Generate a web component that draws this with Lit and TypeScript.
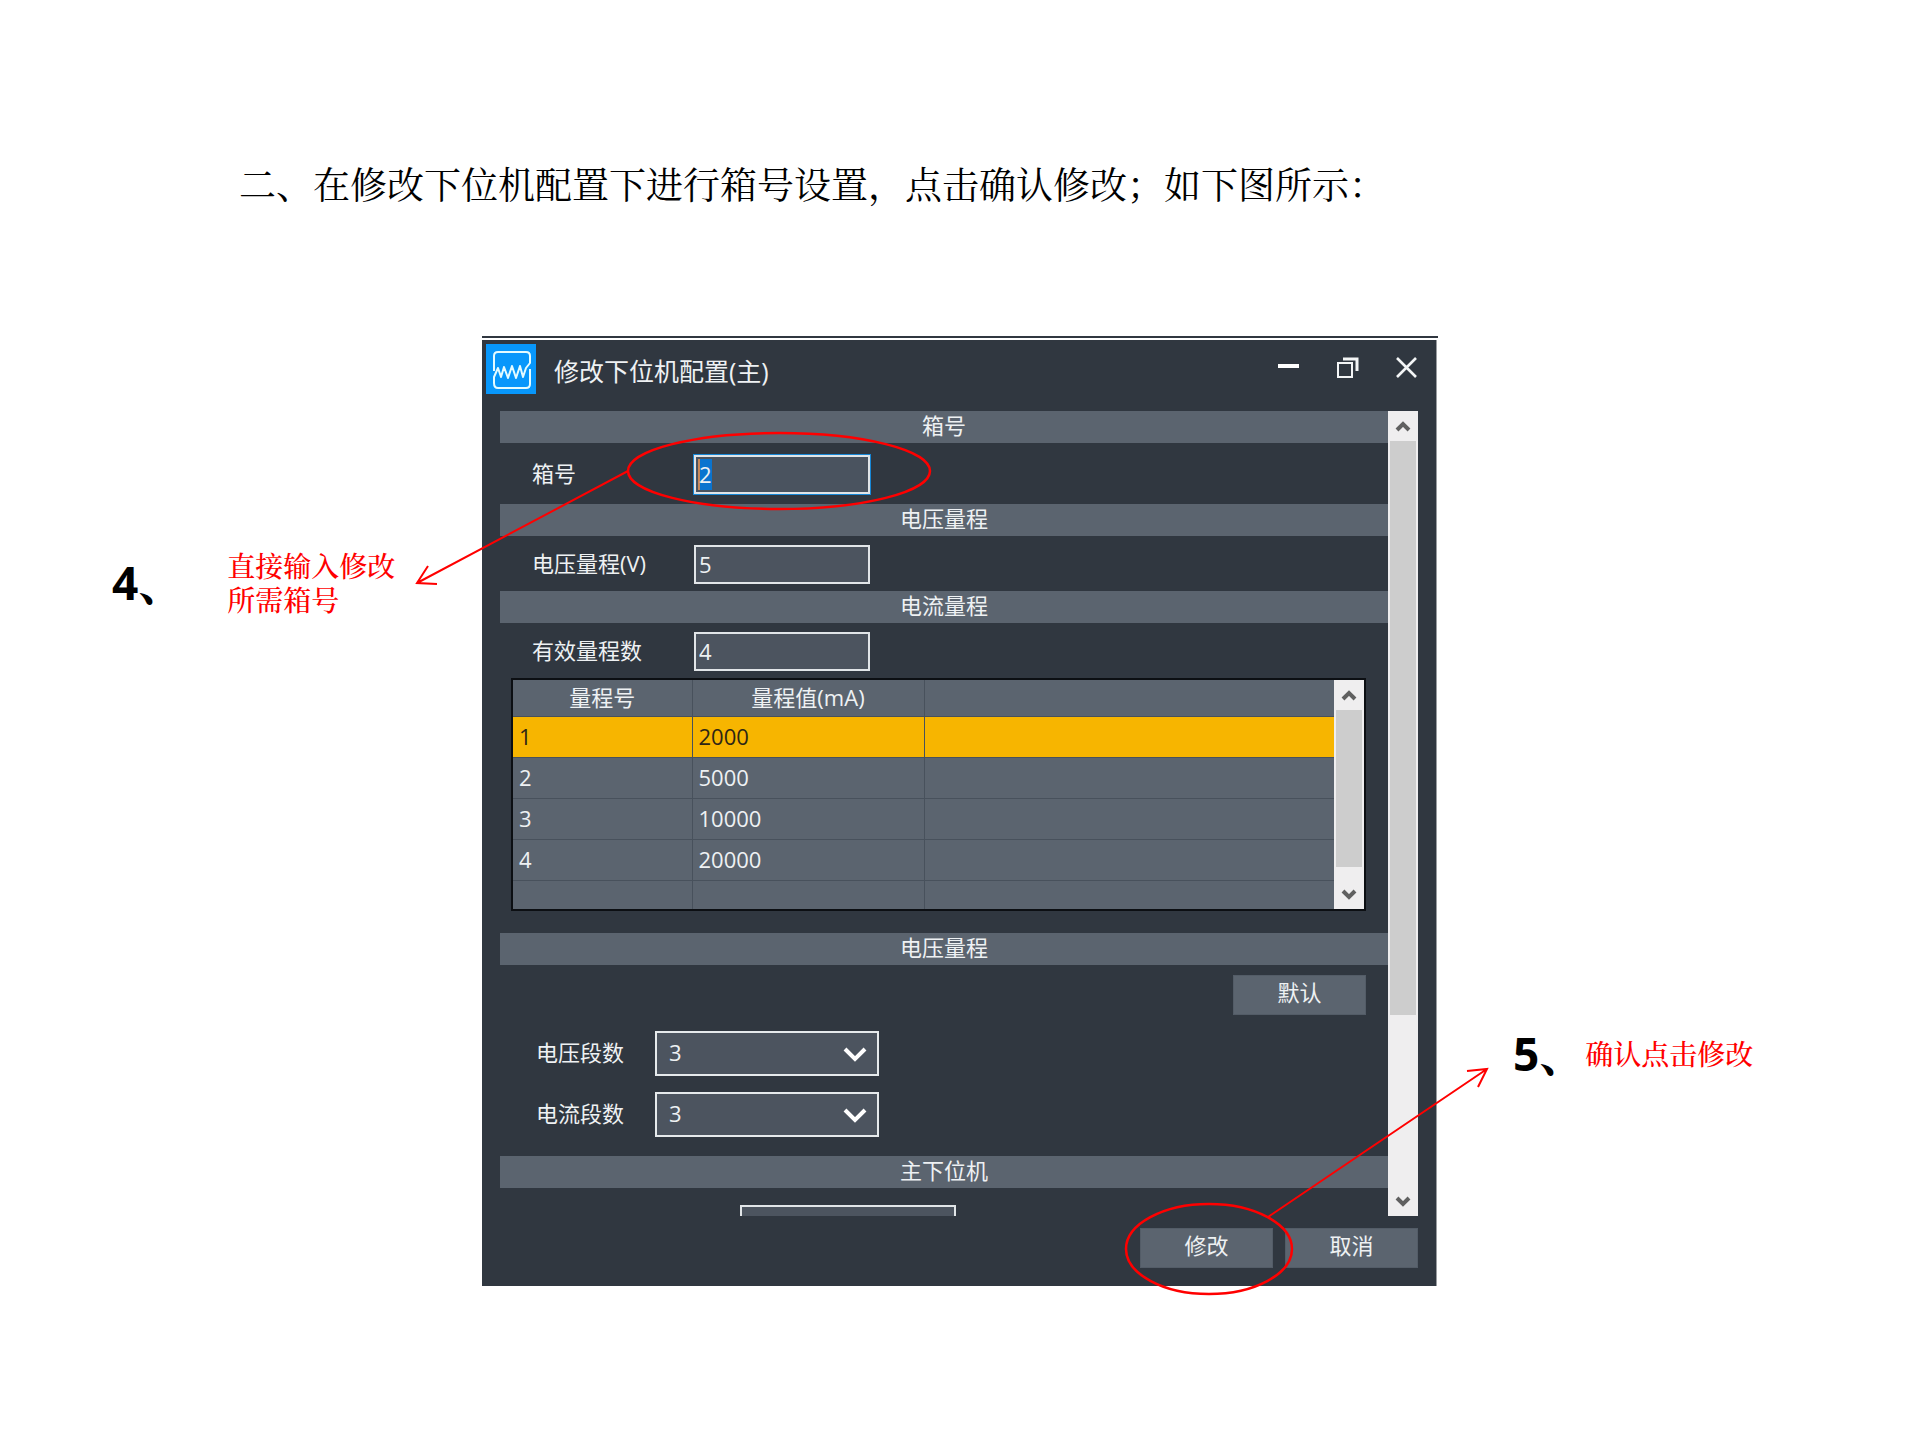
import { LitElement, html, css, svg, nothing } from "lit";
import { customElement, property } from "lit/decorators.js";

const chevronUp = svg`<path d="M2 10 L8 4 L14 10" fill="none" stroke="#606060" stroke-width="4"/>`;
const chevronDown = svg`<path d="M2 3 L8 9 L14 3" fill="none" stroke="#606060" stroke-width="4"/>`;

/** Vertical scroll bar with arrow buttons and a thumb covering a share of the track. */
@customElement("side-scrollbar")
export class SideScrollbar extends LitElement {
  @property({ type: Number }) share = 50;

  static styles = css`
    :host {
      display: flex;
      flex-direction: column;
      flex: none;
      width: 30px;
      background: #efeeef;
    }
    .arrow {
      display: flex;
      align-items: center;
      justify-content: center;
      height: 30px;
      padding: 0;
      border: 0;
      background: none;
    }
    .arrow svg {
      width: 16px;
      height: 12px;
    }
    .track {
      flex: 1;
      padding: 0 2px;
    }
    .thumb {
      background: #cdcdcd;
    }
  `;

  render() {
    return html`
      <button class="arrow" aria-label="向上滚动"><svg viewBox="0 0 16 12">${chevronUp}</svg></button>
      <div class="track"><div class="thumb" style="height:${this.share}%"></div></div>
      <button class="arrow" aria-label="向下滚动"><svg viewBox="0 0 16 12">${chevronDown}</svg></button>
    `;
  }
}

/** The configuration dialog. */
@customElement("config-window")
export class ConfigWindow extends LitElement {
  static styles = css`
    :host {
      display: block;
      border-top: 2px solid #303740;
      padding-top: 2px;
      font: 22px/32px "Open Sans", "Noto Sans CJK SC", sans-serif;
      color: #eef1f3;
    }
    * {
      box-sizing: border-box;
    }
    button,
    input,
    select {
      font: inherit;
      color: inherit;
      border-radius: 0;
      margin: 0;
    }
    .frame {
      margin-right: 1px;
      background: #303740;
      border-right: 1px solid #9a9da1;
      padding: 4px 18px 18px;
    }
    .titlebar {
      display: flex;
      align-items: flex-start;
      height: 67px;
      margin-left: -14px;
    }
    .logo {
      width: 50px;
      height: 50px;
      flex: none;
    }
    .title {
      flex: 1;
      margin: 0;
      padding-left: 18px;
      font-size: 25px;
      line-height: 54px;
      font-weight: 400;
    }
    .controls {
      display: flex;
      gap: 36px;
      padding-top: 12px;
    }
    .controls button {
      width: 23px;
      height: 24px;
      padding: 0;
      border: 0;
      background: none;
    }
    .controls svg {
      display: block;
      width: 23px;
      height: 24px;
    }
    .body {
      display: flex;
      height: 805px;
    }
    .content {
      flex: 1;
      min-width: 0;
      overflow: hidden;
    }
    .bar {
      margin: 0;
      height: 32px;
      font-size: 22px;
      line-height: 28px;
      font-weight: 400;
      text-align: center;
      background: #5b646f;
    }
    .row {
      display: grid;
      grid-template-columns: 162px 176px;
      align-items: center;
      padding: 9px 0 7px 32px;
    }
    .row.first {
      padding: 12px 0 10px 32px;
    }
    label {
      padding-bottom: 4px;
    }
    .field {
      width: 100%;
      height: 39px;
      padding: 0 3px 2px;
      border: 2px solid #e1e5e8;
      background: #4c545f;
    }
    .field.active {
      outline: 1px solid #1787d6;
      background: linear-gradient(#c98a5a, #c98a5a) 2px 2px / 2px 31px no-repeat,
        linear-gradient(#0a74cf, #0a74cf) 2px 2px / 14px 31px no-repeat, #4a535f;
    }
    .grid {
      display: flex;
      margin: 0 22px 22px 11px;
      border: 2px solid #0c0f13;
    }
    table {
      flex: 1;
      border-collapse: collapse;
      table-layout: fixed;
      background: #5b646f;
    }
    th,
    td {
      padding: 0 6px 2px;
      border: 1px solid #48515c;
      border-left: 0;
      border-top: 0;
      line-height: 32px;
      font-weight: 400;
      text-align: left;
    }
    th:last-child,
    td:last-child {
      border-right: 0;
    }
    th {
      height: 36px;
      text-align: center;
    }
    td {
      height: 41px;
    }
    .selected td {
      background: #f7b500;
      color: #2d2616;
    }
    .filler td {
      height: 29px;
      border-bottom: 0;
    }
    .c1 {
      width: 179px;
    }
    .c2 {
      width: 232px;
    }
    .action {
      width: 133px;
      height: 40px;
      padding: 0 0 6px;
      border: 1px solid #535c67;
      background: #5b646f;
    }
    .defaults {
      display: flex;
      justify-content: flex-end;
      padding: 10px 22px 16px;
    }
    .choices {
      display: grid;
      grid-template-columns: 119px 224px;
      row-gap: 16px;
      align-items: center;
      padding: 0 0 19px 36px;
    }
    .choice {
      position: relative;
      display: flex;
    }
    .choice select {
      appearance: none;
      width: 100%;
      height: 45px;
      padding: 0 12px 4px;
      border: 2px solid #e6eaec;
      background: #4c545f;
    }
    .choice svg {
      position: absolute;
      right: 12px;
      top: 15px;
      width: 24px;
      height: 16px;
      pointer-events: none;
    }
    .last {
      padding: 17px 0 0 240px;
    }
    .last .field {
      width: 216px;
    }
    .footer {
      display: flex;
      justify-content: flex-end;
      gap: 12px;
      padding-top: 12px;
    }
  `;

  private ranges = [
    ["1", "2000"],
    ["2", "5000"],
    ["3", "10000"],
    ["4", "20000"],
  ];

  private field(id: string, label: string, value: string, active = false) {
    return html`
      <div class="row ${active ? "first" : ""}">
        <label for=${id}>${label}</label>
        <input id=${id} class="field ${active ? "active" : ""}" type="text" .value=${value} />
      </div>
    `;
  }

  private choice(id: string, label: string) {
    return html`
      <label for=${id}>${label}</label>
      <div class="choice">
        <select id=${id}>
          <option>3</option>
        </select>
        <svg viewBox="0 0 24 16"><path d="M2 3 L12 13 L22 3" fill="none" stroke="#fff" stroke-width="4" /></svg>
      </div>
    `;
  }

  render() {
    return html`
      <div class="frame">
        <header class="titlebar">
          <svg class="logo" viewBox="0 0 50 50">
            <rect width="50" height="50" fill="#0897fb" />
            <g fill="none" stroke="#e4fbff" stroke-width="2" stroke-linejoin="round">
              <path d="M8 27 V12 Q8 8 12 8 H40 Q44 8 44 12 V19 L40 24 L37 33 L34 22 L30 34 L26 22 L22 34 L18 23 L15 33 L12 24 L8 33 V39 Q8 44 12 44 H40 Q44 44 44 40 V25" />
            </g>
          </svg>
          <h2 class="title">修改下位机配置(主)</h2>
          <div class="controls">
            <button aria-label="最小化">
              <svg viewBox="0 0 23 24"><path d="M1 10 H22" stroke="#fff" stroke-width="4" /></svg>
            </button>
            <button aria-label="还原">
              <svg viewBox="0 0 23 24">
                <path d="M7 3 H21 V15" fill="none" stroke="#f3f5f6" stroke-width="3" />
                <rect x="2" y="7" width="14" height="14" fill="none" stroke="#f3f5f6" stroke-width="2" />
              </svg>
            </button>
            <button aria-label="关闭">
              <svg viewBox="0 0 23 24"><path d="M2 2 L21 21 M21 2 L2 21" stroke="#f3f5f6" stroke-width="2.6" /></svg>
            </button>
          </div>
        </header>
        <div class="body">
          <div class="content">
            <h3 class="bar">箱号</h3>
            ${this.field("box", "箱号", "2", true)}
            <h3 class="bar">电压量程</h3>
            ${this.field("volt", "电压量程(V)", "5")}
            <h3 class="bar">电流量程</h3>
            ${this.field("count", "有效量程数", "4")}
            <div class="grid">
              <table>
                <colgroup>
                  <col class="c1" />
                  <col class="c2" />
                  <col />
                </colgroup>
                <thead>
                  <tr><th>量程号</th><th>量程值(mA)</th><th></th></tr>
                </thead>
                <tbody>
                  ${this.ranges.map(
                    ([no, value], i) => html`
                      <tr class=${i === 0 ? "selected" : nothing}><td>${no}</td><td>${value}</td><td></td></tr>
                    `,
                  )}
                  <tr class="filler"><td></td><td></td><td></td></tr>
                </tbody>
              </table>
              <side-scrollbar .share=${93}></side-scrollbar>
            </div>
            <h3 class="bar">电压量程</h3>
            <div class="defaults"><button class="action">默认</button></div>
            <div class="choices">${this.choice("vseg", "电压段数")} ${this.choice("iseg", "电流段数")}</div>
            <h3 class="bar">主下位机</h3>
            <div class="last"><input class="field" type="text" aria-label="主下位机" /></div>
          </div>
          <side-scrollbar .share=${77}></side-scrollbar>
        </div>
        <footer class="footer">
          <button class="action">修改</button>
          <button class="action">取消</button>
        </footer>
      </div>
    `;
  }
}

@customElement("app-root")
export class AppRoot extends LitElement {
  static styles = css`
    :host {
      display: block;
      min-height: 100vh;
      background: #fff;
      color: #000;
    }
    .lead {
      margin: 0;
      padding: 159px 0 129px 239px;
      font: 400 37px/48px SimSun, "Noto Serif CJK SC", "Noto Sans CJK SC", serif;
    }
    .stage {
      display: grid;
      grid-template-columns: 1fr minmax(760px, 956px) 1fr;
      align-items: start;
    }
    .dialog {
      position: relative;
    }
    .note {
      display: flex;
      align-items: center;
      white-space: nowrap;
      color: #f00;
      font: 500 28px/34px SimSun, "Noto Serif CJK SC", "Noto Sans CJK SC", serif;
    }
    .note p {
      margin: 0;
    }
    .note .number {
      color: #000;
      font: 700 46px/56px "Open Sans", "Noto Serif CJK SC", "Noto Sans CJK SC", sans-serif;
    }
    .left {
      gap: 43px;
      padding: 212px 0 0 112px;
    }
    .right {
      padding: 689px 0 0 75px;
    }
    .mark {
      position: absolute;
      overflow: visible;
      pointer-events: none;
      fill: none;
      stroke: #f00;
    }
    .box-mark {
      left: -70px;
      top: 92px;
      width: 520px;
      height: 160px;
    }
    .ok-mark {
      right: -60px;
      top: 724px;
      width: 380px;
      height: 240px;
    }
  `;

  render() {
    return html`
      <main>
        <h1 class="lead">二、在修改下位机配置下进行箱号设置，点击确认修改；如下图所示：</h1>
        <div class="stage">
          <section class="note left">
            <p class="number">4、</p>
            <p>直接输入修改<br />所需箱号</p>
          </section>
          <div class="dialog">
            <config-window></config-window>
            <svg class="mark box-mark" viewBox="0 0 520 160">
              <ellipse cx="367" cy="43" rx="151" ry="38" stroke-width="2.5" />
              <path d="M216 43 L5 155 M16 138 L5 155 L25 156" stroke-width="2" />
            </svg>
            <svg class="mark ok-mark" viewBox="0 0 380 240">
              <ellipse cx="91" cy="189" rx="83" ry="45" stroke-width="2.5" />
              <path d="M150 157 L369 9 M349 11 L369 9 L360 27" stroke-width="2" />
            </svg>
          </div>
          <section class="note right">
            <p class="number">5、</p>
            <p>确认点击修改</p>
          </section>
        </div>
      </main>
    `;
  }
}
